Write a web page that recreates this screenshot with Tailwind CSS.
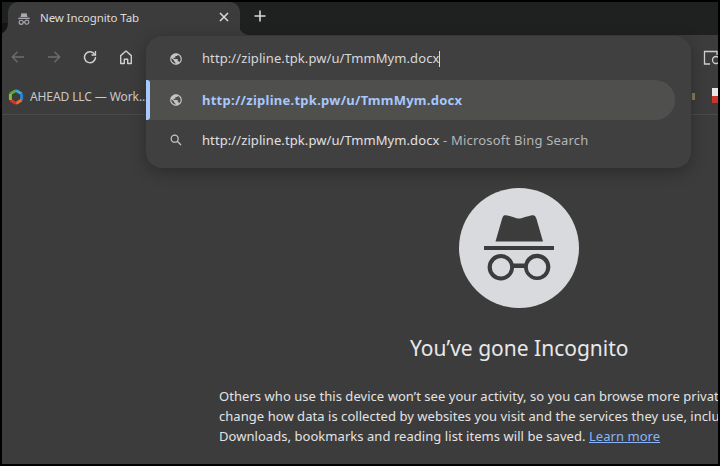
<!DOCTYPE html>
<html><head><meta charset="utf-8"><script src="https://cdn.jsdelivr.net/npm/@tailwindcss/browser@4"></script></head>
<body class="bg-black">
<div class="relative w-[720px] h-[466px] overflow-hidden bg-black pt-[2px] px-[2px] pb-[2px] font-['Noto_Sans','Open_Sans',sans-serif]">
 <div class="relative w-[716px] h-[462px] overflow-hidden bg-[#3c3c3c] flex flex-col">
  <!-- tab strip -->
  <div class="h-[33px] bg-[#1f2120] flex items-stretch shrink-0 relative">
    <div class="absolute left-[-6px] bottom-0 w-3 h-3 bg-[#3c3c3c]"><div class="w-full h-full bg-[#141514] rounded-br-xl"></div></div>
    <div class="absolute left-[236px] bottom-0 w-3 h-3 bg-[#3c3c3c]"><div class="w-full h-full bg-[#1f2120] rounded-bl-xl"></div></div>
    <div class="relative ml-[6px] w-[232px] bg-[#3c3c3c] rounded-t-[10px] flex items-center pl-[9px]">
      <svg class="w-[14px] h-[14px] shrink-0" viewBox="0 0 16 16" fill="#a9abae"><path d="M5.200 1.200 6.600 1.700 8 1.400 9.400 1.700 10.800 1.200 12 5.800H4Z"/><rect x="1.500" y="6.500" width="13" height="1.500"/><path fill-rule="evenodd" d="M4.800 8.800a3 3 0 0 1 2.900 2.100h.6a3 3 0 1 1 0 1.300h-.6a3 3 0 1 1-2.900-3.400Zm0 1.300a1.700 1.700 0 1 0 0 3.400 1.700 1.700 0 0 0 0-3.400Zm6.400 0a1.700 1.700 0 1 0 0 3.400 1.700 1.700 0 0 0 0-3.400Z"/></svg>
      <span class="ml-[9px] text-[11.5px] tracking-[-0.1px] leading-none text-[#dcdcdc] whitespace-nowrap relative top-[-1px]">New Incognito Tab</span>
      <svg class="absolute left-[210px] top-[9px] w-[12px] h-[12px]" viewBox="0 0 12 12" stroke="#d8d8d8" stroke-width="1.600" fill="none"><path d="M2 2l8 8M10 2l-8 8"/></svg>
    </div>
    <svg class="ml-[13px] mt-[7px] w-[14px] h-[14px]" viewBox="0 0 14 14" stroke="#d8d8d8" stroke-width="1.600" fill="none"><path d="M7 1.500v11M1.500 7h11"/></svg>
  </div>
  <!-- toolbar -->
  <div class="h-[45px] shrink-0 flex items-center relative text-[#cfcfcf]">
    <svg class="absolute left-[9px] top-[15px] w-[14px] h-[14px]" viewBox="0 0 14 14" fill="none" stroke="#6d6d6d" stroke-width="1.400"><path d="M13 7H1.500M6.500 1.800 1.300 7l5.200 5.200"/></svg>
    <svg class="absolute left-[45px] top-[15px] w-[14px] h-[14px]" viewBox="0 0 14 14" fill="none" stroke="#6d6d6d" stroke-width="1.400"><path d="M1 7h11.500M7.500 1.800 12.700 7l-5.200 5.200"/></svg>
    <svg class="absolute left-[81px] top-[15px] w-[14px] h-[14px]" viewBox="0 0 14 14" fill="none" stroke="#cfcfcf" stroke-width="1.500"><path d="M11.800 4.500A5.500 5.500 0 1 0 12.500 7"/><path d="M12.500 1v4H8.500" stroke-width="1.300"/></svg>
    <svg class="absolute left-[117px] top-[15px] w-[14px] h-[15px]" viewBox="0 0 14 15" fill="none" stroke="#cfcfcf" stroke-width="1.400" stroke-linejoin="round"><path d="M7 1 1.700 5.600V13.500H5.300V9.200H8.700V13.500H12.300V5.600Z"/></svg>
    <svg class="absolute left-[701px] top-[15px] w-[20px] h-[16px]" viewBox="0 0 20 16" fill="none" stroke="#cfcfcf" stroke-width="1.300"><path d="M7 14H1.500V1.500H14V5"/><circle cx="13" cy="10" r="3.500"/></svg>
  </div>
  <!-- bookmarks -->
  <div class="h-[35px] shrink-0 relative border-b border-[#4a4a4a] flex items-center pl-[6px]">
    <svg class="w-[16px] h-[16px] shrink-0" viewBox="0 0 16 16" fill="none" stroke-width="3"><path d="M8 1.500 2.400 4.700" stroke="#5aa83c"/><path d="M8 1.500 13.600 4.700" stroke="#3aa8d8"/><path d="M13.600 4.700V11" stroke="#2f7fd0"/><path d="M13.600 11 8 14.500" stroke="#e8702a"/><path d="M8 14.500 2.400 11" stroke="#d8352a"/><path d="M2.400 11V4.700" stroke="#8cb83a"/></svg>
    <span class="ml-[6px] text-[12px] tracking-[-0.1px] leading-none text-[#c9c9c9] whitespace-nowrap">AHEAD LLC — Work...</span>
    <span class="absolute left-[690px] top-[13px] w-[3px] h-[7px] bg-[#8a7a5a]"></span>
    <div class="absolute left-[710px] top-[8px] w-[8px] h-[15px] bg-[#e8e8e8] overflow-hidden"><div class="mt-[8px] w-[8px] h-[7px] bg-[#c8352a]"></div></div>
  </div>
  <!-- page -->
  <div class="flex-1 relative">
    <div class="absolute left-[457px] top-[73px] w-[120px] h-[120px] rounded-full bg-[#d9dadd] flex items-center justify-center">
      <svg class="w-[72px] h-[66px]" viewBox="0 0 72 66" fill="#3c3c3c"><path d="M21 0.500c2-1 5 .5 9 1.500 3 1 5 1.500 6 1.500s3-.5 6-1.500c4-1 7-2.500 9-1.500 1.500.5 2 2 2.500 3.500l6.500 22.500H12.500L19 4c.5-1.500 1-3 2-3.500Z"/><rect x="1" y="31" width="70" height="4"/><path fill-rule="evenodd" d="M18 39a13.200 13.200 0 0 1 12.600 9.500h10.800A13.200 13.200 0 1 1 41 53H31a13.200 13.200 0 1 1-13-14Zm0 4a9.200 9.200 0 1 0 0 18.400 9.200 9.200 0 0 0 0-18.400Zm36 0a9.200 9.200 0 1 0 0 18.400 9.200 9.200 0 0 0 0-18.400Z"/></svg>
    </div>
    <h1 class="absolute left-[408px] top-[219px] text-[21px] leading-[28px] text-[#e8e8e8] whitespace-nowrap">You’ve gone Incognito</h1>
    <div class="absolute left-[217px] top-[271px] text-[13px] tracking-[0.05px] leading-[20px] text-[#e3e3e3] whitespace-nowrap">
      <p>Others who use this device won’t see your activity, so you can browse more privately. This won’t</p>
      <p>change how data is collected by websites you visit and the services they use, including their</p>
      <p>Downloads, bookmarks and reading list items will be saved. <a class="text-[#8ab4f8] underline">Learn more</a></p>
    </div>
  </div>
  <!-- omnibox popup -->
  <div class="absolute left-[144px] top-[34px] w-[545px] h-[132px] bg-[#404040] rounded-[16px] shadow-[0_4px_16px_rgba(0,0,0,0.28)] flex flex-col overflow-hidden">
    <div class="h-[44px] flex items-center shrink-0 pt-[1px]">
      <svg class="ml-[23px] w-[14px] h-[14px] shrink-0" viewBox="0 0 24 24" fill="#c4c4c4"><path d="M12 2C6.480 2 2 6.480 2 12s4.480 10 10 10 10-4.480 10-10S17.520 2 12 2zm-1 17.930c-3.950-.49-7-3.850-7-7.930 0-.62.08-1.210.21-1.790L9 15v1c0 1.100.9 2 2 2v1.930zm6.900-2.540c-.26-.81-1-1.390-1.900-1.390h-1v-3c0-.55-.45-1-1-1H8v-2h2c.55 0 1-.45 1-1V7h2c1.100 0 2-.9 2-2v-.41c2.930 1.190 5 4.060 5 7.410 0 2.080-.8 3.970-2.100 5.390z"/></svg>
      <span class="ml-[19px] text-[13px] tracking-[0.09px] leading-none text-[#d8d8d8] whitespace-nowrap">http://zipline.tpk.pw/u/TmmMym.docx</span><span class="w-px h-[16px] bg-[#d8d8d8]"></span>
    </div>
    <div class="h-[40px] w-[529px] shrink-0 bg-[#4f4f4e] rounded-r-[20px] flex items-center relative">
      <span class="absolute left-0 top-0 w-[4px] h-[40px] bg-[#a8c7fa] rounded-r-[3px]"></span>
      <svg class="ml-[23px] w-[14px] h-[14px] shrink-0" viewBox="0 0 24 24" fill="#c4c4c4"><path d="M12 2C6.480 2 2 6.480 2 12s4.480 10 10 10 10-4.480 10-10S17.520 2 12 2zm-1 17.930c-3.950-.49-7-3.850-7-7.930 0-.62.08-1.210.21-1.790L9 15v1c0 1.100.9 2 2 2v1.930zm6.900-2.540c-.26-.81-1-1.390-1.900-1.390h-1v-3c0-.55-.45-1-1-1H8v-2h2c.55 0 1-.45 1-1V7h2c1.100 0 2-.9 2-2v-.41c2.930 1.190 5 4.060 5 7.410 0 2.080-.8 3.970-2.100 5.390z"/></svg>
      <span class="ml-[19px] text-[13px] tracking-[0.26px] font-bold leading-none text-[#a8c7fa] whitespace-nowrap">http://zipline.tpk.pw/u/TmmMym.docx</span>
    </div>
    <div class="h-[40px] shrink-0 flex items-center">
      <svg class="ml-[24px] w-[12px] h-[12px] shrink-0" viewBox="0 0 12 12" fill="none" stroke="#c4c4c4" stroke-width="1.300"><circle cx="4.700" cy="4.700" r="3.500"/><path d="M7.300 7.300 11 11"/></svg>
      <span class="ml-[20px] text-[13px] tracking-[0.09px] leading-none text-[#e0e0e0] whitespace-nowrap">http://zipline.tpk.pw/u/TmmMym.docx<span class="text-[#b5b5b5] tracking-[0.2px]"> - Microsoft Bing Search</span></span>
    </div>
  </div>
 </div>
</div>
</body></html>
